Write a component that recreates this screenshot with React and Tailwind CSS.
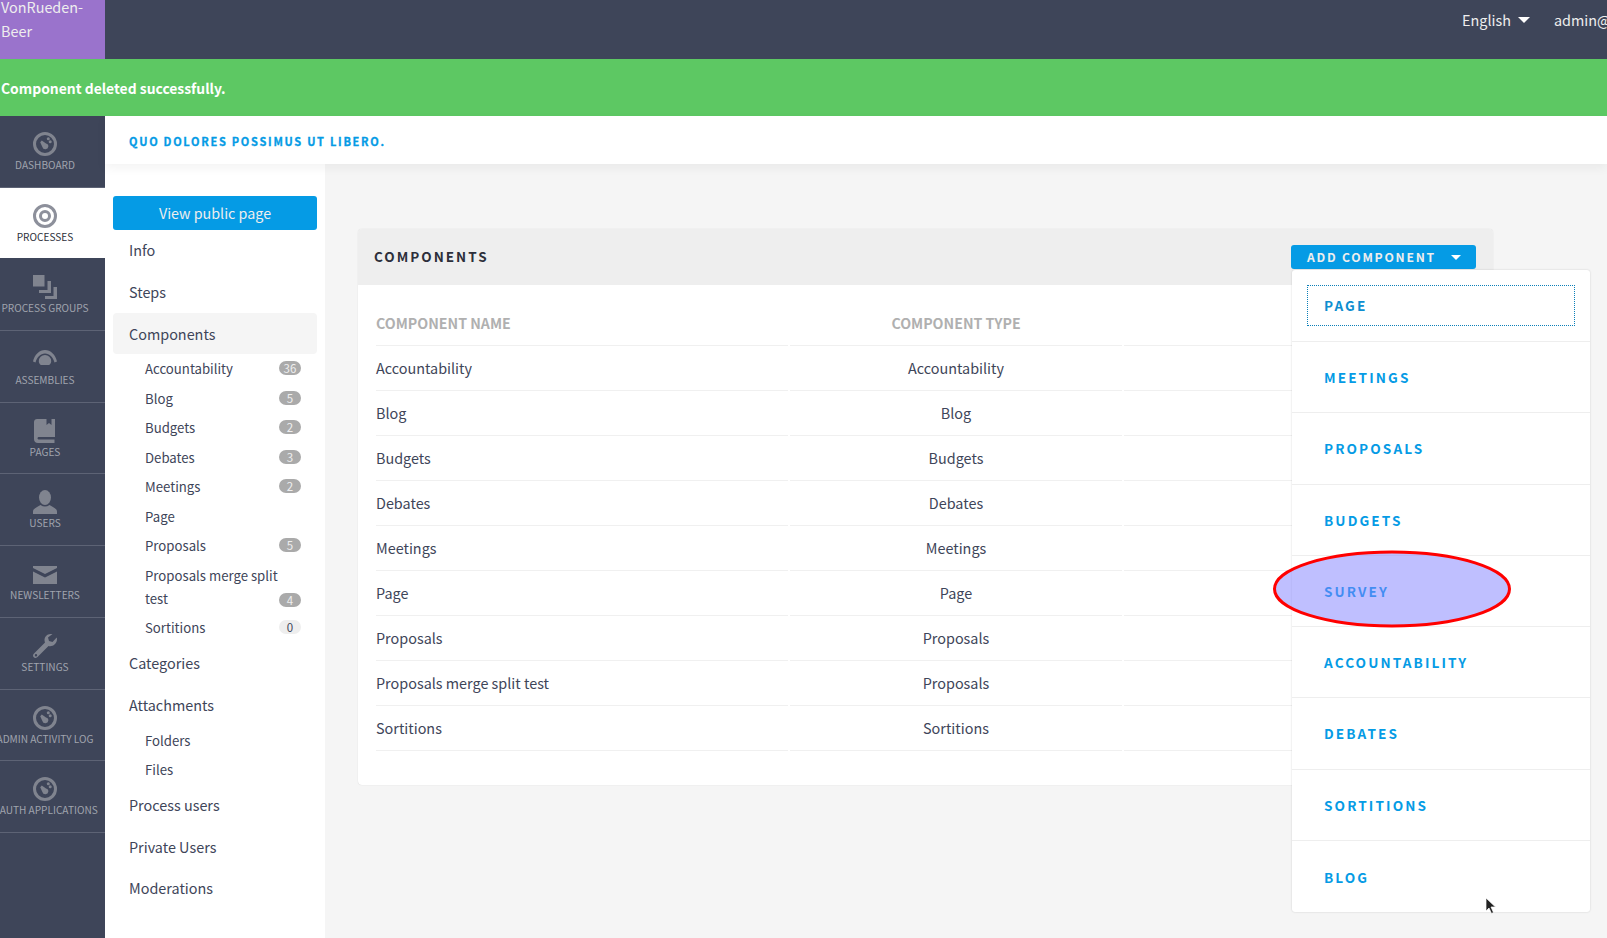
import React from "react";

const FONT = "font-['Noto_Sans_CJK_SC','Source_Sans_Pro',sans-serif]";

function DashIcon({ className }) {
  return (
    <svg viewBox="0 0 24 24" className={className} fill="currentColor">
      <path fillRule="evenodd" d="M12 0a12 12 0 1 0 0 24a12 12 0 0 0 0-24zm0 3a9 9 0 1 1 0 18a9 9 0 0 1 0-18z" />
      <path d="M7.200 10.200l1.600-1.800 4.200 3a3 3 0 1 1-3.600 3.500z" />
      <circle cx="15.300" cy="6.700" r="1.500" />
      <circle cx="17.200" cy="9.800" r="1.500" />
    </svg>
  );
}

function TargetIcon({ className }) {
  return (
    <svg viewBox="0 0 24 24" className={className} fill="currentColor">
      <path fillRule="evenodd" d="M12 0a12 12 0 1 0 0 24a12 12 0 0 0 0-24zm0 3a9 9 0 1 1 0 18a9 9 0 0 1 0-18z" />
      <path fillRule="evenodd" d="M12 6a6 6 0 1 0 0 12a6 6 0 0 0 0-12zm0 3a3 3 0 1 1 0 6a3 3 0 0 1 0-6z" />
    </svg>
  );
}

function LayersIcon({ className }) {
  return (
    <svg viewBox="0 0 24 24" className={className} fill="currentColor">
      <rect x="0" y="0" width="11.500" height="11.500" />
      <path d="M14.500 6H18v12H6v-3h8.500z" />
      <path d="M20.500 12H24v12H12v-3h8.500z" />
    </svg>
  );
}

function AssemblyIcon({ className }) {
  return (
    <svg viewBox="0 0 24 24" className={className} fill="currentColor">
      <path d="M0 14.500C1.500 7.500 6.500 3 12 3s10.500 4.500 12 11.500l-2.500 1C20 10 16.500 6.500 12 6.500S4 10 2.500 15.500z" />
      <path d="M12 8a6.200 6.200 0 0 1 6.200 6.200c0 2-1 3-2.200 3.800H8c-1.200-.8-2.200-1.800-2.200-3.800A6.200 6.200 0 0 1 12 8z" />
    </svg>
  );
}

function BookIcon({ className }) {
  return (
    <svg viewBox="0 0 24 24" className={className} fill="currentColor">
      <path d="M4 0h9.500v6l2.500-2 2.500 2V0h3.500v18H6c-2 0-2 2.500 0 2.500h15.500V24H5c-2.500 0-4-1.500-4-4V3c0-2 1.500-3 3-3z" />
    </svg>
  );
}

function UserIcon({ className }) {
  return (
    <svg viewBox="0 0 24 24" className={className} fill="currentColor">
      <ellipse cx="12" cy="7.500" rx="6" ry="7.500" />
      <path d="M0 24v-2.500c0-3 5-5 7.500-6.500 3 2 6 2 9 0 2.500 1.500 7.500 3.500 7.500 6.500V24z" />
    </svg>
  );
}

function MailIcon({ className }) {
  return (
    <svg viewBox="0 0 24 24" className={className} fill="currentColor">
      <path d="M0 4h24v2L12 12 0 6z" />
      <path d="M0 9.500l12 6 12-6V22H0z" />
    </svg>
  );
}

function WrenchIcon({ className }) {
  return (
    <svg viewBox="0 0 24 24" className={className} fill="currentColor">
      <path fillRule="evenodd" d="M17.500 0c-3.500 0-6 3-6 6 0 1 .2 1.800.5 2.500L1 19.500c-1.300 1.300-1.300 2.800-.2 3.800s2.500 1 3.700-.2L15.500 12c3.500 1 8.500-1.500 8.500-7 0-.7-.1-1-.3-1.500L19.500 8 16 7l-1-3.500L19.500 0zM3 20a1.200 1.200 0 1 1 0 2.400A1.200 1.200 0 0 1 3 20z" />
    </svg>
  );
}

const NAV = [
  { label: "DASHBOARD", Icon: DashIcon },
  { label: "PROCESSES", Icon: TargetIcon, active: true },
  { label: "PROCESS GROUPS", Icon: LayersIcon },
  { label: "ASSEMBLIES", Icon: AssemblyIcon },
  { label: "PAGES", Icon: BookIcon },
  { label: "USERS", Icon: UserIcon },
  { label: "NEWSLETTERS", Icon: MailIcon },
  { label: "SETTINGS", Icon: WrenchIcon },
  { label: "ADMIN ACTIVITY LOG", Icon: DashIcon },
  { label: "OAUTH APPLICATIONS", Icon: DashIcon },
];

const COMPONENTS = [
  ["Accountability", "Accountability"],
  ["Blog", "Blog"],
  ["Budgets", "Budgets"],
  ["Debates", "Debates"],
  ["Meetings", "Meetings"],
  ["Page", "Page"],
  ["Proposals", "Proposals"],
  ["Proposals merge split test", "Proposals"],
  ["Sortitions", "Sortitions"],
];

const SUB = [
  { name: "Accountability", n: 36 },
  { name: "Blog", n: 5 },
  { name: "Budgets", n: 2 },
  { name: "Debates", n: 3 },
  { name: "Meetings", n: 2 },
  { name: "Page" },
  { name: "Proposals", n: 5 },
];

const MENU = ["MEETINGS", "PROPOSALS", "BUDGETS", "SURVEY", "ACCOUNTABILITY", "DEBATES", "SORTITIONS", "BLOG"];

function Badge({ n }) {
  const light = n === 0;
  return (
    <span className={`w-[22px] h-[14px] -mt-[2px] rounded-full text-[11.500px] leading-[14px] text-center ${light ? "bg-[#eeeeee] text-[#3e4559]" : "bg-[#aaaaaa] text-[#eeeeee]"}`}>
      {n}
    </span>
  );
}

function SideLink({ children, className = "" }) {
  return <div className={`h-[41.800px] pl-4 flex items-center text-[14.400px] text-[#3e4559] ${className}`}>{children}</div>;
}

function SubLink({ name, n }) {
  return (
    <div className="h-[29.500px] pl-8 pr-4 flex items-center justify-between text-[13.200px] text-[#3e4559]">
      <span>{name}</span>
      {n !== undefined && <Badge n={n} />}
    </div>
  );
}

export default function App() {
  return (
    <div className={`relative h-[938px] w-[1607px] overflow-hidden bg-[#f5f5f5] ${FONT}`}>
      {/* top bar */}
      <header className="h-[59px] bg-[#3e4559] flex">
        <div className="w-[105px] h-full bg-[#9a73cc] text-[#eeeeee] text-[14.400px] leading-[24px] pl-px overflow-hidden">
          <div className="-mt-[5px]">VonRueden-<br />Beer</div>
        </div>
        <div className="flex-1 flex justify-end overflow-hidden whitespace-nowrap text-[14.400px] text-[#eeeeee]">
          <div className="flex items-center h-[39px] gap-[7px]">
            <span>English</span>
            <span className="w-0 h-0 border-x-[6px] border-x-transparent border-t-[6px] border-t-white" />
          </div>
          <div className="h-[39px] w-[53px] ml-[24px] flex items-center">admin@</div>
        </div>
      </header>

      <div className="h-[57px] bg-[#5dc863] text-white font-semibold text-[13.900px] flex items-center pl-px pt-px">
        Component deleted successfully.
      </div>

      <div className="flex h-[822px]">
        {/* main nav */}
        <nav className="w-[105px] shrink-0 bg-[#3e4559]">
          {NAV.map(({ label, Icon, active }) => (
            <div
              key={label}
              className={`h-[71.700px] w-full border-b overflow-hidden ${active ? "bg-white text-[#2c2f3a] border-[#3e4559]" : "text-[#a0a4ae] border-[#5d6375]"}`}
            >
              <div className="w-[90px] flex flex-col items-center pt-[16px] whitespace-nowrap">
                <Icon className={`w-6 h-6 shrink-0 ${active ? "text-[#8d909b]" : "text-[#80848f]"}`} />
                <span className="text-[10.100px] leading-[18px]">{label}</span>
              </div>
            </div>
          ))}
        </nav>

        <div className="flex-1 flex flex-col min-w-0">
          <div className="relative z-10 h-[48px] bg-white shadow-[0_4px_10px_rgba(0,0,0,0.05)] pl-6 pt-[3px] flex items-center text-[11px] font-bold tracking-[1.730px] text-[#059be5] [-webkit-text-stroke:0.3px_#059be5]">
            QUO DOLORES POSSIMUS UT LIBERO.
          </div>

          <div className="flex flex-1 min-h-0">
            {/* secondary nav */}
            <aside className="w-[220px] shrink-0 bg-white px-2 pt-8">
              <div className="h-[34px] rounded-[3px] bg-[#059be5] text-[#eeeeee] text-[14.300px] flex items-center justify-center">
                View public page
              </div>
              <div className="-mt-[1px]">
                <SideLink>Info</SideLink>
                <SideLink>Steps</SideLink>
                <SideLink className="bg-[#f5f5f5] rounded-[4px]">Components</SideLink>
              </div>
              {SUB.map((s) => <SubLink key={s.name} {...s} />)}
              <div className="pl-8 pr-4 pt-[3px] pb-[2px] text-[13.200px] leading-[23.500px] text-[#3e4559] flex flex-wrap justify-between items-end">
                <span className="w-full">Proposals merge split</span>
                <span>test</span>
                <span className="flex mb-[4px]"><Badge n={4} /></span>
              </div>
              <SubLink name="Sortitions" n={0} />
              <SideLink>Categories</SideLink>
              <SideLink>Attachments</SideLink>
              <SubLink name="Folders" />
              <SubLink name="Files" />
              <SideLink className="-mt-[1px]">Process users</SideLink>
              <SideLink>Private Users</SideLink>
              <SideLink className="-mt-[0.500px]">Moderations</SideLink>
            </aside>

            {/* content */}
            <main className="flex-1 pl-[33px] pt-[65px] pr-[114px] min-w-0">
              <section className="h-[556px] bg-white rounded-[4px] shadow-[0_0_1px_rgba(0,0,0,0.2)]">
                <div className="relative h-[56px] bg-[#eeeeee] rounded-t-[4px] flex items-center justify-between pl-4 pr-[17px]">
                  <h2 className="text-[13.500px] font-semibold tracking-[2px] text-[#2c2f3a] -mt-[2px]">COMPONENTS</h2>
                  <div className="relative self-start mt-[16px] w-[185px] h-[24px] pt-px rounded-[3px] bg-[#059be5] text-[#eeeeee] text-[12.200px] font-semibold tracking-[1.750px] flex items-center pl-4">
                    ADD COMPONENT
                    <span className="absolute right-[15px] top-[10px] w-0 h-0 border-x-[5px] border-x-transparent border-t-[5px] border-t-white" />
                    {/* open dropdown */}
                    <div className="absolute z-20 left-[1px] top-[25px] w-[298px] h-[642px] bg-white rounded-[3px] shadow-[0_0_2px_rgba(0,0,0,0.18)] tracking-[2.100px] text-[13.600px] text-[#059be5]">
                      <div className="h-[72px] p-[15px] border-b border-[#eeeeee]">
                        <div className="h-[41px] pl-[16px] flex items-center border border-dotted border-[#0b7fb8] text-[#0e8ed0]">PAGE</div>
                      </div>
                      {MENU.map((m, i) => (
                        <div key={m} className={`h-[71.300px] pl-[32px] flex items-center ${i < MENU.length - 1 ? "border-b border-[#eeeeee]" : ""}`}>{m}</div>
                      ))}
                    </div>
                  </div>
                </div>

                <table className="ml-[16px] mt-[16px] w-[1100px] table-fixed border-separate border-spacing-x-[2px] border-spacing-y-0 text-[14.400px] text-[#3e4559]">
                  <thead>
                    <tr className="text-[14.200px] font-semibold text-[#b0b0b0]">
                      <th className="h-[45px] w-[412px] text-left font-semibold border-b border-[#f0f0f0] p-0 pt-[2px]">COMPONENT NAME</th>
                      <th className="w-[332px] text-center font-semibold border-b border-[#f0f0f0] p-0 pt-[2px]">COMPONENT TYPE</th>
                      <th className="border-b border-[#f0f0f0] p-0" />
                    </tr>
                  </thead>
                  <tbody>
                    {COMPONENTS.map(([name, type]) => (
                      <tr key={name}>
                        <td className="h-[45px] border-b border-[#f0f0f0] p-0">{name}</td>
                        <td className="text-center border-b border-[#f0f0f0] p-0">{type}</td>
                        <td className="border-b border-[#f0f0f0] p-0" />
                      </tr>
                    ))}
                  </tbody>
                </table>
              </section>
            </main>
          </div>
        </div>
      </div>

      {/* annotation drawn over the screenshot */}
      <svg className="absolute left-[1272px] top-[550px] z-30 pointer-events-none" width="240" height="78" viewBox="0 0 240 78">
        <ellipse cx="120" cy="39" rx="117.500" ry="37" fill="#8080ff" fillOpacity="0.5" stroke="#ff0000" strokeWidth="3" />
      </svg>

      {/* mouse pointer */}
      <svg className="absolute left-[1485px] top-[897px] z-30 pointer-events-none" width="12" height="18" viewBox="0 0 12 18">
        <path d="M1 1v13l3-3 2.500 5.500 2-1L6 10h4.500z" fill="#222222" stroke="#ffffff" strokeWidth="0.700" />
      </svg>
    </div>
  );
}
